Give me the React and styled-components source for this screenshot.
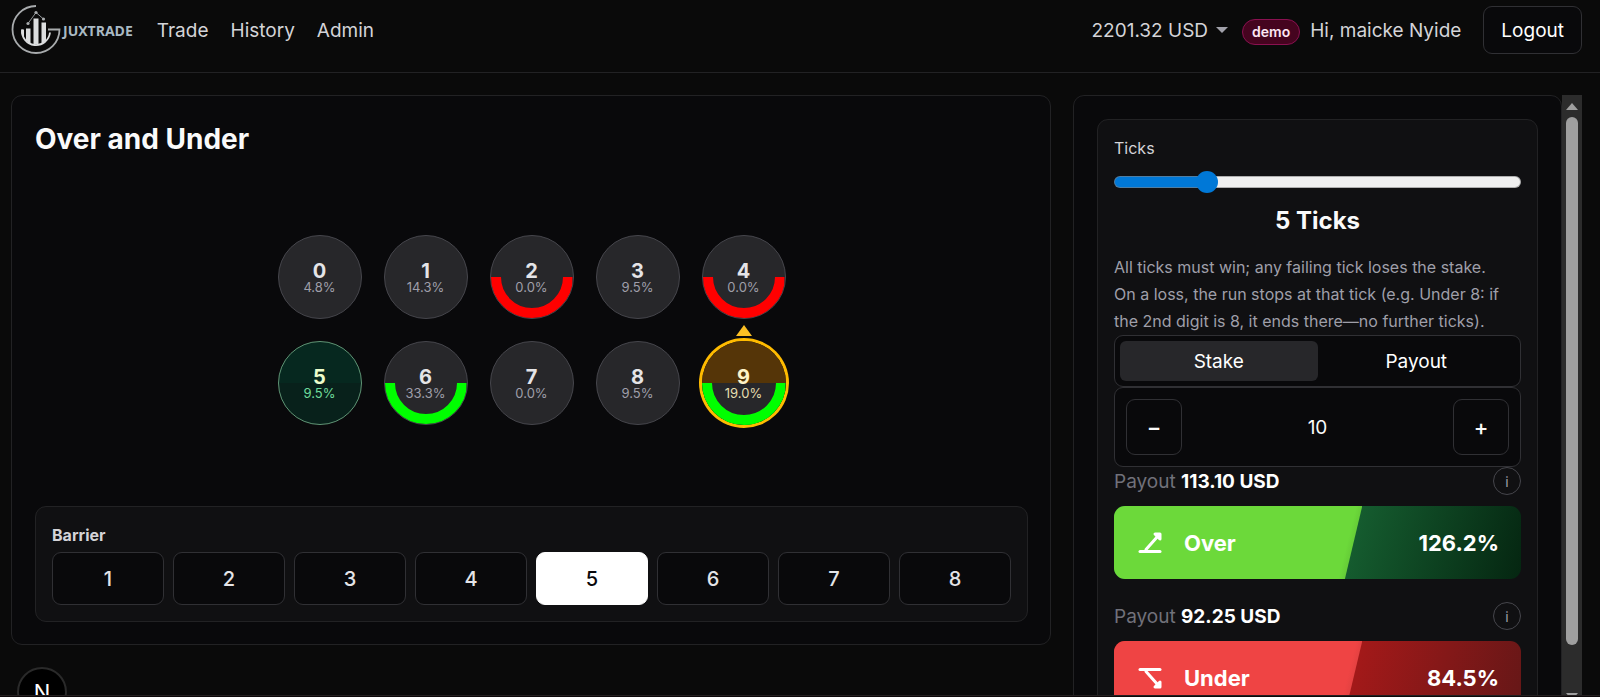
import React, { useState } from "react";
import styled, { createGlobalStyle, css } from "styled-components";

const digits = [
  { digit: 0, percent: "4.8%" },
  { digit: 1, percent: "14.3%" },
  { digit: 2, percent: "0.0%", arc: "#ff0000" },
  { digit: 3, percent: "9.5%" },
  { digit: 4, percent: "0.0%", arc: "#ff0000" },
  { digit: 5, percent: "9.5%" },
  { digit: 6, percent: "33.3%", arc: "#00ff00" },
  { digit: 7, percent: "0.0%" },
  { digit: 8, percent: "9.5%" },
  { digit: 9, percent: "19.0%", arc: "#00ff00" },
];

const barriers = [1, 2, 3, 4, 5, 6, 7, 8];
const lastDigit = 9;

const Logo = () => (
  <LogoLink href="#">
    <svg width="50" height="50" viewBox="0 0 50 50" fill="none">
      <path
        d="M25 1A23.500 23.500 0 1 0 48.500 24.500H37"
        stroke="#a8abad"
        strokeWidth="1.800"
      />
      <path d="M10.500 24.500H13V34a15 15 0 0 1-2.500-9.500Z" fill="#dcdedf" />
      <path d="M15 23.500h4.500v15.500l-4.500-3.500Z" fill="#dcdedf" />
      <path d="M22.500 13.500h5v26h-5Z" fill="#dcdedf" />
      <path d="M30.500 17.500h4.500v18.500l-4.500 3Z" fill="#dcdedf" />
      <path
        d="M11 24.500a14 14 0 0 0 28 3"
        stroke="#dcdedf"
        strokeWidth="1.800"
      />
      <path d="M17 18.500l8-11 7.500 6.500" stroke="#8f9396" strokeWidth="1" />
      <circle cx="17" cy="18.500" r="1.600" fill="#a8abad" />
      <circle cx="25" cy="7.500" r="1.600" fill="#a8abad" />
      <circle cx="32.500" cy="14" r="1.600" fill="#a8abad" />
    </svg>
    <LogoText>JUXTRADE</LogoText>
  </LogoLink>
);

const TradeIcon = ({ children }) => (
  <svg
    width="24"
    height="24"
    viewBox="0 0 24 24"
    fill="none"
    stroke="#fff"
    strokeWidth="3"
    strokeLinecap="round"
    strokeLinejoin="round"
  >
    {children}
  </svg>
);

const OverIcon = () => (
  <TradeIcon>
    <path d="M2 20.500H22" />
    <path d="M8 18.500L20 5" />
    <path d="M17 3H22V8Z" fill="#fff" />
  </TradeIcon>
);

const UnderIcon = () => (
  <TradeIcon>
    <path d="M2 3.500H22" />
    <path d="M8 5.500L20 19" />
    <path d="M17 21H22V16Z" fill="#fff" />
  </TradeIcon>
);

const App = () => {
  const [ticks, setTicks] = useState(5);
  const [barrier, setBarrier] = useState(5);
  const [mode, setMode] = useState("stake");
  const [amount, setAmount] = useState(10);

  const renderDigit = ({ digit, percent, arc }) => (
    <Digit
      key={digit}
      $arc={arc}
      $selected={digit === barrier}
      $last={digit === lastDigit}
    >
      {digit === lastDigit && <Pointer />}
      <DigitValue>{digit}</DigitValue>
      <DigitPercent>{percent}</DigitPercent>
    </Digit>
  );

  return (
    <>
      <GlobalStyle />
      <Header>
        <Logo />
        <Nav>
          <NavLink href="#">Trade</NavLink>
          <NavLink href="#">History</NavLink>
          <NavLink href="#">Admin</NavLink>
        </Nav>
        <Balance>
          2201.32 USD
          <Caret />
        </Balance>
        <Badge>demo</Badge>
        <Greeting>Hi, maicke Nyide</Greeting>
        <Logout>Logout</Logout>
      </Header>

      <Main>
        <Board>
          <Title>Over and Under</Title>
          <DigitGrid>{digits.map(renderDigit)}</DigitGrid>
          <BarrierCard>
            <BarrierLabel id="barrier">Barrier</BarrierLabel>
            <BarrierRow role="group" aria-labelledby="barrier">
              {barriers.map((value) => (
                <BarrierButton
                  key={value}
                  $active={value === barrier}
                  onClick={() => setBarrier(value)}
                >
                  {value}
                </BarrierButton>
              ))}
            </BarrierRow>
          </BarrierCard>
        </Board>

        <Side>
          <SideScroll>
            <SidePanel>
              <TradeCard>
                <TicksLabel htmlFor="ticks">Ticks</TicksLabel>
                <Slider
                  id="ticks"
                  type="range"
                  min="1"
                  max="20"
                  value={ticks}
                  style={{ "--fill": (ticks - 1) / 19 }}
                  onChange={(e) => setTicks(Number(e.target.value))}
                />
                <TicksValue>{ticks} Ticks</TicksValue>
                <Hint>
                  All ticks must win; any failing tick loses the stake. On a
                  loss, the run stops at that tick (e.g. Under 8: if the 2nd
                  digit is 8, it ends there—no further ticks).
                </Hint>
                <Tabs>
                  <Tab
                    $active={mode === "stake"}
                    onClick={() => setMode("stake")}
                  >
                    Stake
                  </Tab>
                  <Tab
                    $active={mode === "payout"}
                    onClick={() => setMode("payout")}
                  >
                    Payout
                  </Tab>
                </Tabs>
                <Stepper>
                  <StepButton
                    aria-label="Decrease"
                    onClick={() => setAmount(Number(amount) - 1)}
                  >
                    −
                  </StepButton>
                  <AmountInput
                    aria-label="Amount"
                    value={amount}
                    onChange={(e) => setAmount(e.target.value)}
                  />
                  <StepButton
                    aria-label="Increase"
                    onClick={() => setAmount(Number(amount) + 1)}
                  >
                    +
                  </StepButton>
                </Stepper>
                <Trades>
                  <div>
                    <PayoutRow>
                      <span>
                        Payout <strong>113.10 USD</strong>
                      </span>
                      <InfoButton>i</InfoButton>
                    </PayoutRow>
                    <TradeButton $from="#155c2f" $to="#052611">
                      <TradeFace $color="#6cd93a" $edge="#5cbb33">
                        <OverIcon />
                        Over
                      </TradeFace>
                      <TradePercent>126.2%</TradePercent>
                    </TradeButton>
                  </div>
                  <div>
                    <PayoutRow>
                      <span>
                        Payout <strong>92.25 USD</strong>
                      </span>
                      <InfoButton>i</InfoButton>
                    </PayoutRow>
                    <TradeButton $from="#a31919" $to="#651717">
                      <TradeFace $color="#ef4444" $edge="#d33d3d">
                        <UnderIcon />
                        Under
                      </TradeFace>
                      <TradePercent>84.5%</TradePercent>
                    </TradeButton>
                  </div>
                </Trades>
              </TradeCard>
            </SidePanel>
          </SideScroll>
          <ScrollTrack>
            <ScrollArrow />
            <ScrollRail>
              <ScrollThumb />
            </ScrollRail>
            <ScrollArrow $down />
          </ScrollTrack>
        </Side>
      </Main>

      <DevBadge aria-label="Dev tools">N</DevBadge>
      <BottomEdge />
    </>
  );
};

const GlobalStyle = createGlobalStyle`
  * {
    box-sizing: border-box;
  }

  body {
    margin: 0;
    height: 100vh;
    overflow: hidden;
    background-color: #0a0a0a;
    color: #fafafa;
    font-family: Inter, "Liberation Sans", sans-serif;
    font-size: 19px;
  }

  button,
  input {
    margin: 0;
    padding: 0;
    font: inherit;
    color: inherit;
  }

  button {
    cursor: pointer;
  }
`;

const Header = styled.header`
  display: flex;
  align-items: center;
  height: 73px;
  padding: 6px 18px 18px 11px;
  border-bottom: 1px solid #222224;
  color: #d4d4d8;
`;

const LogoLink = styled.a`
  display: flex;
  align-items: center;
  gap: 2px;
  text-decoration: none;
`;

const LogoText = styled.span`
  font-family: "Open Sans", sans-serif;
  font-size: 14px;
  font-weight: bold;
  color: #a9b9c3;
`;

const Nav = styled.nav`
  display: flex;
  gap: 22px;
  margin-left: 24px;
  margin-right: auto;
`;

const NavLink = styled.a`
  color: #d4d4d8;
  text-decoration: none;
`;

const Balance = styled.button`
  display: flex;
  align-items: center;
  gap: 8px;
  border: none;
  background: none;
`;

const Caret = styled.span`
  border: 6px solid transparent;
  border-top-color: #a1a1aa;
  border-bottom: none;
`;

const Badge = styled.span`
  margin: 3px 10px 0 14px;
  padding: 0 9px;
  border: 1px solid #8a1150;
  border-radius: 13px;
  background-color: #45041f;
  color: #fce7f3;
  font-size: 14px;
  font-weight: 600;
  line-height: 24px;
`;

const Greeting = styled.span`
  margin-right: 22px;
`;

const Logout = styled.button`
  height: 48px;
  padding: 0 17px;
  border: 1px solid #303034;
  border-radius: 9px;
  background-color: #09090b;
  color: #fff;
`;

const Main = styled.main`
  display: grid;
  grid-template-columns: minmax(0, 1fr) 509px;
  align-items: start;
  gap: 22px;
  padding: 22px 18px 0 11px;
`;

const Board = styled.section`
  padding: 25px 22px 22px 23px;
  border: 1px solid #222224;
  border-radius: 11px;
  background-color: #09090b;
`;

const Title = styled.h1`
  margin: 0;
  font-size: 28px;
  font-weight: 700;
  line-height: 36px;
`;

const DigitGrid = styled.div`
  display: grid;
  grid-template-columns: repeat(5, 84px);
  justify-content: center;
  gap: 22px;
  padding: 78px 0 81px;
`;

const DigitValue = styled.span`
  z-index: 1;
  font-size: 20px;
  font-weight: 700;
  line-height: 20px;
  color: #e4e4e7;
`;

const DigitPercent = styled.span`
  z-index: 1;
  font-size: 13px;
  line-height: 12px;
  color: #9f9fa9;
`;

const Digit = styled.div`
  position: relative;
  display: flex;
  flex-direction: column;
  align-items: center;
  justify-content: center;
  height: 84px;
  border: 1px solid #46464c;
  border-radius: 50%;
  background-color: #27272a;

  ${({ $selected }) =>
    $selected &&
    css`
      border-color: #5f9575;
      background: linear-gradient(#06281f 50%, #08211b 50%);

      ${DigitValue} {
        color: #ecfccb;
      }

      ${DigitPercent} {
        color: #6fdc9c;
      }
    `}

  ${({ $last }) =>
    $last &&
    css`
      border: none;
      background: linear-gradient(#553508 50%, #27272a 50%);
      box-shadow: 0 0 0 3px #ffbb00;

      ${DigitValue} {
        color: #fef3c7;
      }

      ${DigitPercent} {
        color: #e5dfb0;
      }
    `}

  ${({ $arc }) =>
    $arc &&
    css`
      &::before {
        content: "";
        position: absolute;
        inset: 0;
        border: 10px solid ${$arc};
        border-radius: 50%;
        clip-path: inset(50% 0 0 0);
      }
    `}
`;

const Pointer = styled.span`
  position: absolute;
  top: -16px;
  border: 8px solid transparent;
  border-bottom: 11px solid #fbbf24;
  border-top: none;
`;

const BarrierCard = styled.div`
  padding: 16px;
  border: 1px solid #222224;
  border-radius: 11px;
  background-color: #101012;
`;

const BarrierLabel = styled.div`
  margin-bottom: 5px;
  font-size: 16px;
  font-weight: 700;
  line-height: 24px;
  color: #d4d4d8;
`;

const BarrierRow = styled.div`
  display: grid;
  grid-template-columns: repeat(8, 1fr);
  gap: 9px;
`;

const BarrierButton = styled.button`
  height: 53px;
  border: 1px solid ${({ $active }) => ($active ? "#fff" : "#303034")};
  border-radius: 9px;
  background-color: ${({ $active }) => ($active ? "#fff" : "#09090b")};
  color: ${({ $active }) => ($active ? "#09090b" : "#e4e4e7")};
  font-size: 20px;
  font-weight: 500;
`;

const Side = styled.aside`
  display: flex;
  height: calc(100vh - 85px);
`;

const SideScroll = styled.div`
  flex: 1;
  min-width: 0;
  overflow-y: auto;
  scrollbar-width: none;
`;

const SidePanel = styled.div`
  padding: 23px;
  border: 1px solid #222224;
  border-radius: 11px;
  background-color: #09090b;
`;

const TradeCard = styled.div`
  display: flex;
  flex-direction: column;
  padding: 16px;
  border: 1px solid #222224;
  border-radius: 11px;
  background-color: #101012;
`;

const TicksLabel = styled.label`
  font-size: 16px;
  line-height: 24px;
  color: #d4d4d8;
`;

const Slider = styled.input`
  --pos: calc(11px + (100% - 22px) * var(--fill));
  appearance: none;
  width: 100%;
  height: 22px;
  margin: 11px 0 12px;
  background: none;

  &::-webkit-slider-runnable-track {
    height: 12px;
    border: 1px solid rgba(130, 130, 130, 0.6);
    border-radius: 6px;
    background: linear-gradient(
        to right,
        #0078d7 var(--pos),
        #efefef var(--pos)
      )
      border-box;
  }

  &::-webkit-slider-thumb {
    appearance: none;
    width: 22px;
    height: 22px;
    margin-top: -6px;
    border-radius: 50%;
    background-color: #0078d7;
  }
`;

const TicksValue = styled.div`
  font-size: 24px;
  font-weight: 700;
  line-height: 32px;
  text-align: center;
`;

const Hint = styled.p`
  margin: 17px 0 0;
  padding-right: 16px;
  font-size: 16px;
  line-height: 27px;
  color: #9f9fa9;
`;

const Tabs = styled.div`
  display: grid;
  grid-template-columns: 1fr 1fr;
  height: 52px;
  padding: 5px;
  border: 1px solid #303034;
  border-radius: 9px;
  background-color: #09090b;
`;

const Tab = styled.button`
  border: none;
  border-radius: 6px;
  background-color: ${({ $active }) => ($active ? "#27272a" : "transparent")};
  color: #fff;
`;

const Stepper = styled.div`
  display: flex;
  align-items: center;
  height: 80px;
  padding: 0 11px;
  border: 1px solid #303034;
  border-radius: 9px;
  background-color: #09090b;
`;

const StepButton = styled.button`
  width: 56px;
  height: 56px;
  border: 1px solid #303034;
  border-radius: 9px;
  background: none;
  font-size: 22px;
  font-weight: 500;
`;

const AmountInput = styled.input`
  flex: 1;
  min-width: 0;
  border: none;
  outline: none;
  background: none;
  text-align: center;
`;

const Trades = styled.div`
  display: grid;
  gap: 23px;
`;

const PayoutRow = styled.div`
  display: flex;
  align-items: center;
  justify-content: space-between;
  height: 28px;
  margin-bottom: 11px;
  color: #71717a;

  strong {
    font-weight: 700;
    color: #fff;
  }
`;

const InfoButton = styled.button`
  width: 28px;
  height: 28px;
  border: 1px solid #46464c;
  border-radius: 50%;
  background: none;
  font-size: 14px;
  color: #9f9fa9;
`;

const TradeButton = styled.button`
  display: flex;
  align-items: stretch;
  justify-content: space-between;
  width: 100%;
  height: 73px;
  border: none;
  border-radius: 11px;
  overflow: hidden;
  background: linear-gradient(
    105deg,
    ${({ $from }) => $from} 58%,
    ${({ $to }) => $to}
  );
  color: #fff;
  font-size: 22px;
  font-weight: 700;
`;

const TradeFace = styled.span`
  display: flex;
  align-items: center;
  gap: 22px;
  width: 61%;
  padding-left: 24px;
  clip-path: polygon(0 0, 100% 0, 93% 100%, 0 100%);
  background: linear-gradient(
    104deg,
    ${({ $color }) => $color} 91%,
    ${({ $edge }) => $edge} 97%
  );
`;

const TradePercent = styled.span`
  align-self: center;
  padding-right: 22px;
`;

const ScrollTrack = styled.div`
  display: flex;
  flex-direction: column;
  width: 20px;
  background-color: #2c2c2c;
`;

const ScrollArrow = styled.span`
  display: grid;
  place-items: center;
  height: 22px;

  &::before {
    content: "";
    border: 6px solid transparent;
    border-bottom: 7px solid #9f9f9f;
    border-top: none;
    transform: ${({ $down }) => ($down ? "rotate(180deg)" : "none")};
  }
`;

const ScrollRail = styled.div`
  flex: 1;
  padding: 0 4px;
`;

const ScrollThumb = styled.div`
  height: 93%;
  border-radius: 6px;
  background-color: #9f9f9f;
`;

const DevBadge = styled.button`
  position: fixed;
  left: 17px;
  bottom: -20px;
  width: 50px;
  height: 50px;
  border: 2px solid #2a2a2a;
  border-radius: 50%;
  background-color: #000;
  color: #fff;
  font-size: 22px;
`;

const BottomEdge = styled.div`
  position: fixed;
  inset: auto 0 0;
  height: 2px;
  border-top: 1px solid #241f20;
  background-color: #0d090a;
`;

export default App;
